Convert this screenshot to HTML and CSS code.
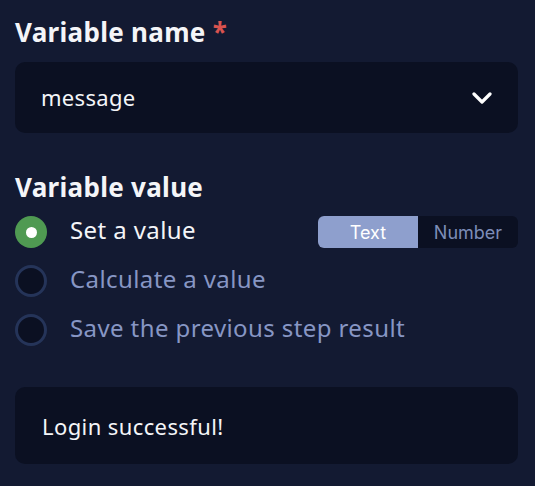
FILE: index.html
```html
<!DOCTYPE html>
<html>
<head>
<meta charset="utf-8">
<link rel="stylesheet" href="styles.css">
</head>
<body>
<div class="panel">
  <div class="label">Variable name <span class="req">*</span></div>
  <div class="select">
    <span class="select-text">message</span>
    <svg class="chev" width="20" height="12" viewBox="0 0 20 12"><path d="M2 2 L10 10 L18 2" fill="none" stroke="#ffffff" stroke-width="3.2" stroke-linecap="round" stroke-linejoin="round"/></svg>
  </div>
  <div class="label label2">Variable value</div>
  <div class="options">
    <div class="option">
      <span class="radio on"></span>
      <span class="opt-text active">Set a value</span>
      <div class="toggle">
        <span class="seg sel">Text</span>
        <span class="seg">Number</span>
      </div>
    </div>
    <div class="option">
      <span class="radio"></span>
      <span class="opt-text">Calculate a value</span>
    </div>
    <div class="option">
      <span class="radio"></span>
      <span class="opt-text">Save the previous step result</span>
    </div>
  </div>
  <div class="box">Login successful!</div>
</div>
</body>
</html>
```

FILE: styles.css
```css
html, body {
  margin: 0;
  padding: 0;
  background: #131a32;
}
body {
  font-family: "Noto Sans", "Open Sans", sans-serif;
  color: #ffffff;
  width: 535px;
  height: 486px;
  overflow: hidden;
}
.panel {
  padding: 14px 17px 0 15px;
  display: flex;
  flex-direction: column;
}
.label {
  font-size: 26px;
  font-weight: 700;
  letter-spacing: 0.3px;
  line-height: 36px;
  height: 36px;
  color: #f4f5f8;
}
.req {
  color: #d9534f;
}
.select {
  margin-top: 12px;
  height: 71px;
  background: #0b1022;
  border-radius: 10px;
  display: flex;
  align-items: center;
  justify-content: space-between;
  padding: 0 26px 0 26px;
}
.select-text {
  font-size: 22px;
  letter-spacing: 0.3px;
  color: #f4f5f8;
  padding-bottom: 2px;
}
.chev {
  display: block;
}
.label2 {
  margin-top: 36px;
}
.options {
  display: flex;
  flex-direction: column;
  margin-top: 11px;
}
.option {
  display: flex;
  align-items: center;
  height: 32px;
  margin-bottom: 17px;
}
.radio {
  width: 32px;
  height: 32px;
  box-sizing: border-box;
  border-radius: 50%;
  background: #0b1022;
  border: 3px solid #253459;
  flex: none;
  margin-right: 23px;
}
.radio.on {
  background: #4f9a52;
  border: none;
  display: flex;
  align-items: center;
  justify-content: center;
}
.radio.on::after {
  content: "";
  width: 11px;
  height: 11px;
  border-radius: 50%;
  background: #ffffff;
}
.opt-text {
  font-size: 24px;
  letter-spacing: 0.4px;
  color: #8796c4;
  padding-bottom: 5px;
}
.opt-text.active {
  color: #f4f5f8;
}
.toggle {
  margin-left: auto;
  display: flex;
  height: 32px;
  border-radius: 6px;
  overflow: hidden;
  background: #0b1022;
  font-family: "Inter", "Roboto", sans-serif;
  font-size: 18px;
}
.seg {
  width: 100px;
  display: flex;
  align-items: center;
  justify-content: center;
  color: #7d8db8;
}
.seg.sel {
  background: #8e9fcd;
  color: #ffffff;
}
.box {
  margin-top: 24px;
  height: 77px;
  background: #0b1022;
  border-radius: 10px;
  display: flex;
  align-items: center;
  padding-left: 27px;
  font-size: 22px;
  letter-spacing: 0.4px;
  color: #f4f5f8;
}
```
